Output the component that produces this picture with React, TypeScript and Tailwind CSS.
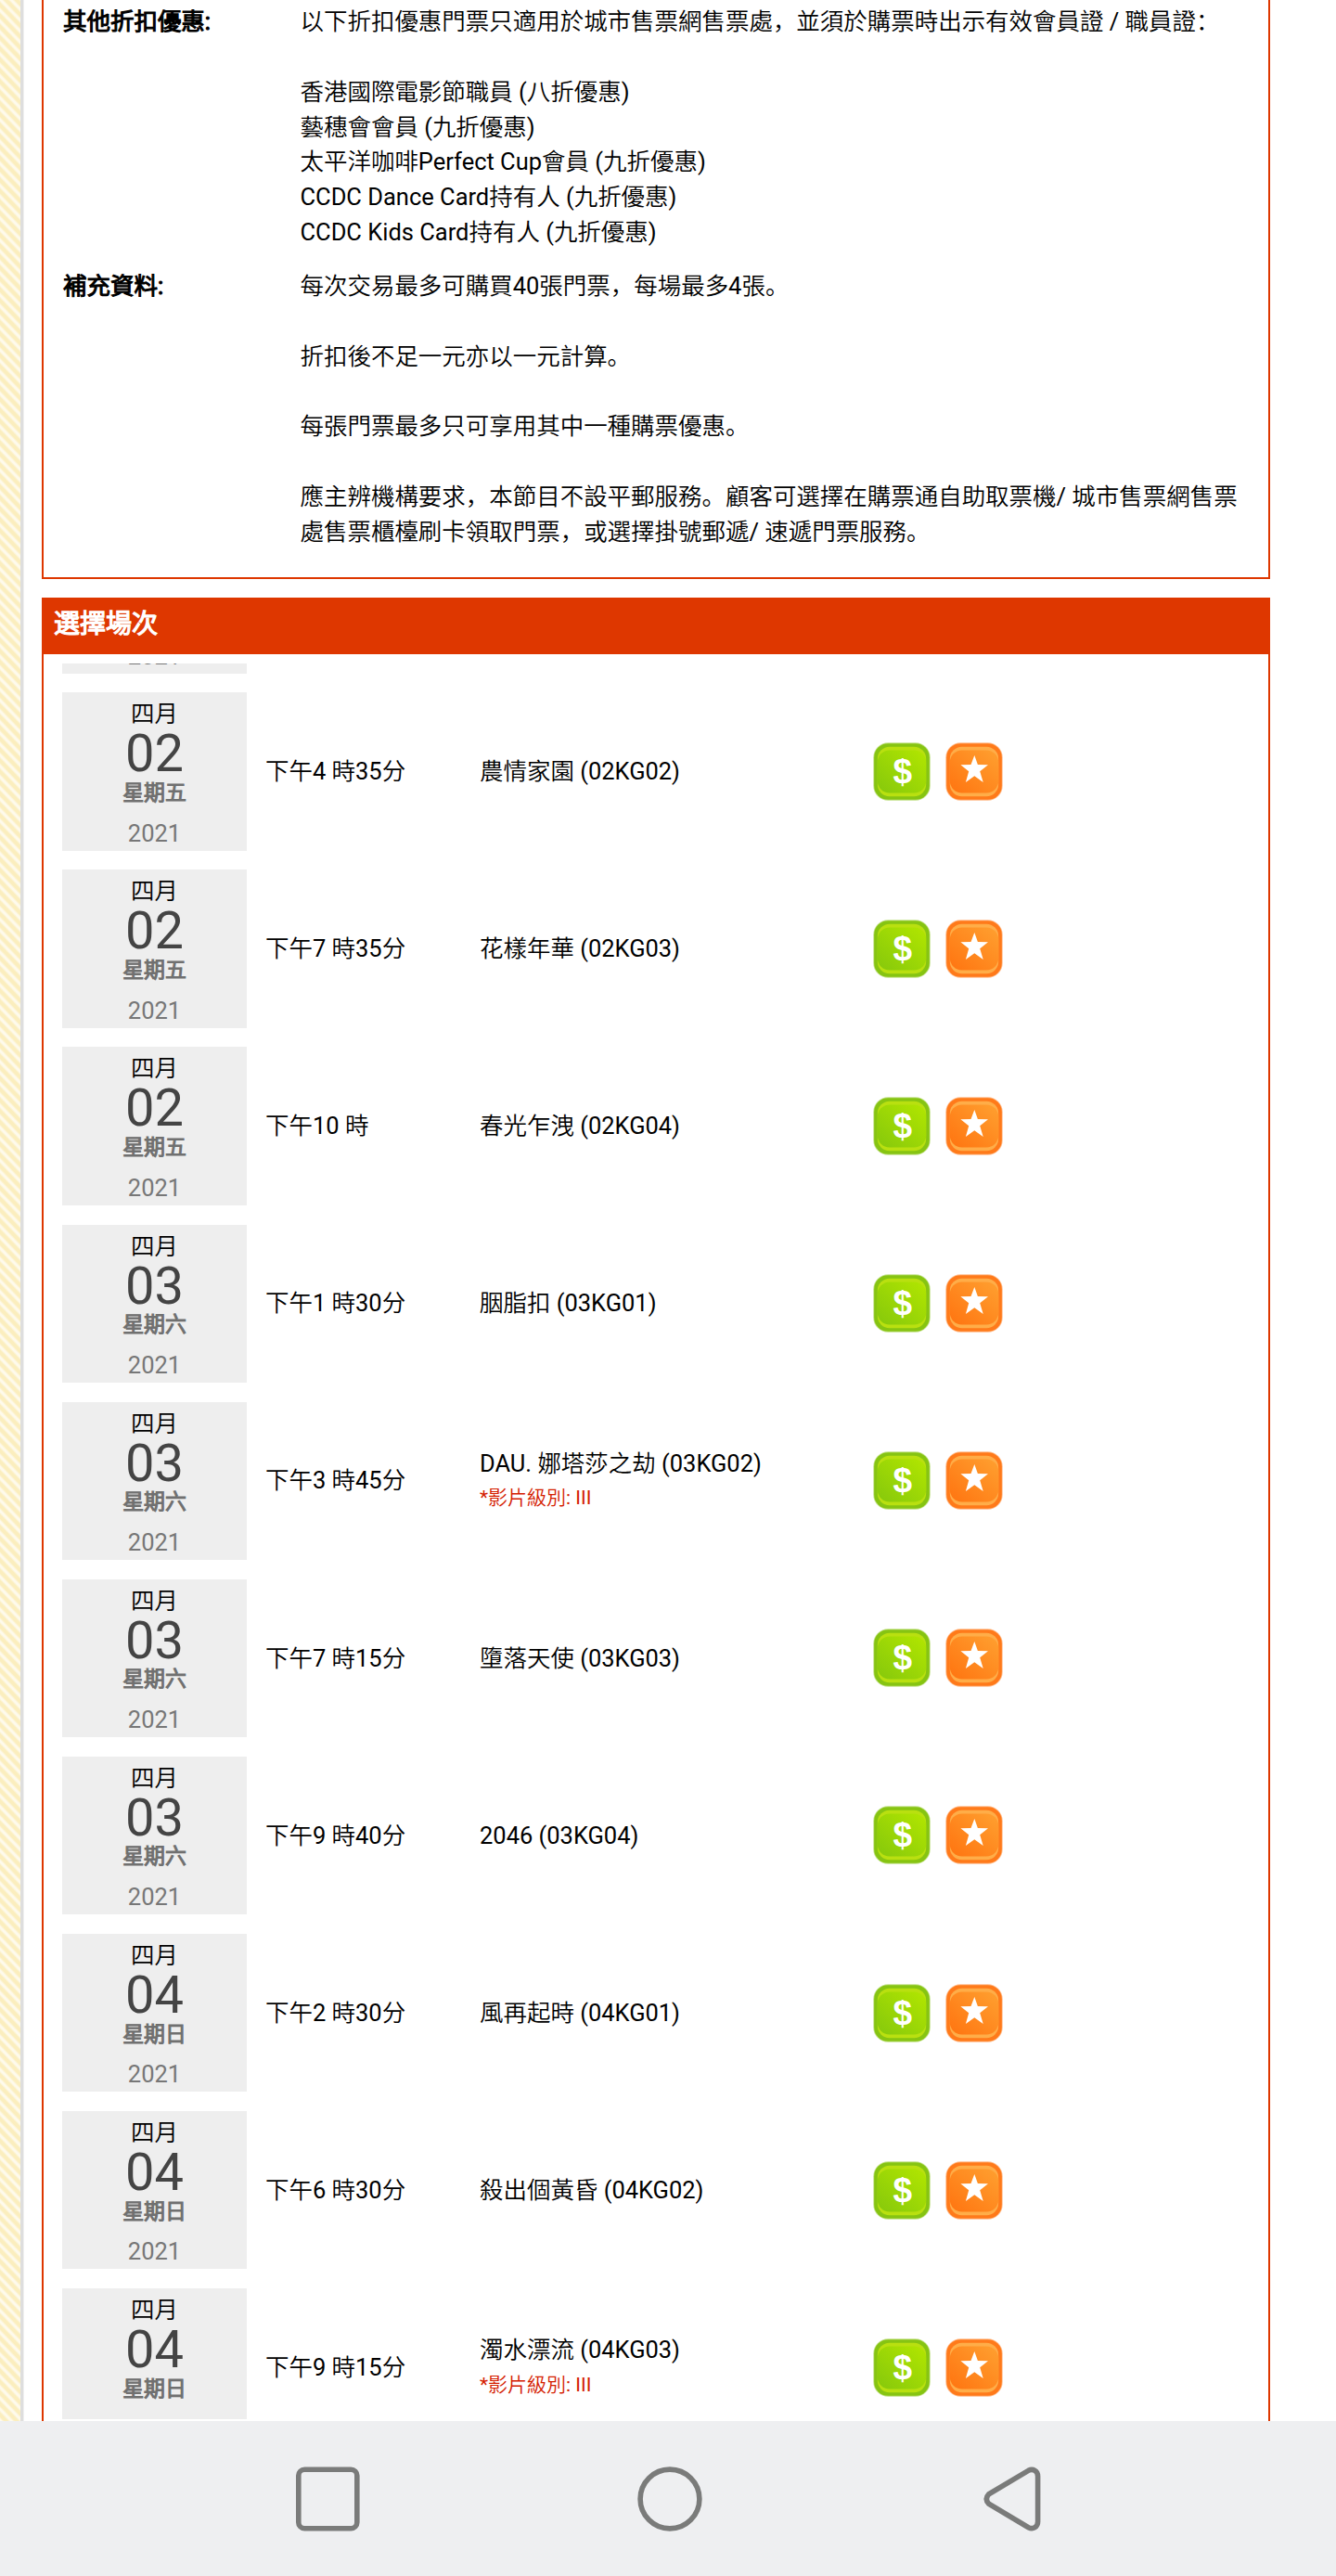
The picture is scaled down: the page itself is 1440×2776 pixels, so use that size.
import React from "react";

const SESSIONS = [
  { day: "02", week: "星期五", time: "下午4 時35分", title: "農情家園 (02KG02)" },
  { day: "02", week: "星期五", time: "下午7 時35分", title: "花樣年華 (02KG03)" },
  { day: "02", week: "星期五", time: "下午10 時", title: "春光乍洩 (02KG04)" },
  { day: "03", week: "星期六", time: "下午1 時30分", title: "胭脂扣 (03KG01)" },
  { day: "03", week: "星期六", time: "下午3 時45分", title: "DAU. 娜塔莎之劫 (03KG02)", note: "*影片級別: III" },
  { day: "03", week: "星期六", time: "下午7 時15分", title: "墮落天使 (03KG03)" },
  { day: "03", week: "星期六", time: "下午9 時40分", title: "2046 (03KG04)" },
  { day: "04", week: "星期日", time: "下午2 時30分", title: "風再起時 (04KG01)" },
  { day: "04", week: "星期日", time: "下午6 時30分", title: "殺出個黃昏 (04KG02)" },
  { day: "04", week: "星期日", time: "下午9 時15分", title: "濁水漂流 (04KG03)", note: "*影片級別: III" },
];

function Gradients() {
  return (
    <svg width="0" height="0" className="absolute">
      <defs>
        <linearGradient id="green" x1="0" y1="1" x2="1" y2="0">
          <stop offset="0" stopColor="#86c80c" />
          <stop offset="1" stopColor="#b2e600" />
        </linearGradient>
        <linearGradient id="orange" x1="0" y1="1" x2="1" y2="0">
          <stop offset="0" stopColor="#ff7410" />
          <stop offset="1" stopColor="#ffa030" />
        </linearGradient>
      </defs>
    </svg>
  );
}

function BuyIcon() {
  return (
    <svg viewBox="0 0 62 63" className="h-[63px] w-[62px]">
      <rect x="0.3" y="0.3" width="61.4" height="62.4" rx="16" fill="#86c412" fillOpacity="0.5" />
      <rect x="1.2" y="1.2" width="59.6" height="60.6" rx="15" fill="#86c412" />
      <rect x="4.8" y="4.8" width="52.4" height="53.4" rx="13" fill="#b9e010" />
      <rect x="4.8" y="8.5" width="52.4" height="46" rx="13" fill="url(#green)" />
      <text x="31.8" y="43.5" textAnchor="middle" fontFamily="Liberation Sans" fontWeight="700" fontSize="37" fill="#fff">$</text>
    </svg>
  );
}

function StarIcon() {
  return (
    <svg viewBox="0 0 62 63" className="h-[63px] w-[62px]">
      <rect x="0.3" y="0.3" width="61.4" height="62.4" rx="16" fill="#ff7a1a" fillOpacity="0.5" />
      <rect x="1.2" y="1.2" width="59.6" height="60.6" rx="15" fill="#ff7a1a" />
      <rect x="4.8" y="4.8" width="52.4" height="53.4" rx="13" fill="#ffad48" />
      <rect x="4.8" y="8.5" width="52.4" height="46" rx="13" fill="url(#orange)" />
      <path d="M31.3 14 L34.9 24 L46 24.2 L37.2 31.3 L40.7 43 L31.3 36.2 L21.9 43 L25.2 31.3 L16.4 24.2 L27.5 24 Z" fill="#fff" />
    </svg>
  );
}

function InfoRow({ label, children }: { label: string; children: React.ReactNode }) {
  return (
    <div className="flex">
      <div className="w-[256.5px] shrink-0 pl-[1px] [-webkit-text-stroke:1.2px_#000]">{label}</div>
      <div className="w-[1030px] whitespace-pre-line">{children}</div>
    </div>
  );
}

function Session({ s }: { s: (typeof SESSIONS)[number] }) {
  return (
    <div className="flex h-[170.7px] shrink-0 items-center">
      <div className="flex h-full w-[199px] flex-col items-center bg-[#eeeeee] pt-[5px]">
        <div className="h-[37px] leading-[37px]">四月</div>
        <div className="h-[50px] text-[56px] leading-[48px] text-[#444]">{s.day}</div>
        <div className="h-[36px] text-[22.9px] leading-[33px] text-[#707070] [-webkit-text-stroke:1.2px_#707070]">{s.week}</div>
        <div className="mt-[6px] leading-[37px] text-[#777]">2021</div>
      </div>
      <div className="ml-[20px] w-[231px] pt-px">{s.time}</div>
      <div className="w-[424px] pt-px">
        <div>{s.title}</div>
        {s.note && <div className="text-[21px] text-[#d42000]">{s.note}</div>}
      </div>
      <div className="flex gap-4">
        <BuyIcon />
        <StarIcon />
      </div>
    </div>
  );
}

export default function App() {
  return (
    <div className="flex h-[2776px] w-[1440px] flex-col overflow-hidden bg-white font-['Roboto','Noto_Sans_CJK_SC_DemiLight','Noto_Sans_CJK_SC',sans-serif] text-[25.48px] leading-[37.85px] text-black">
      <Gradients />
      <div className="flex h-[2609px] overflow-hidden">
        <div className="h-full w-[22px] shrink-0 bg-[repeating-linear-gradient(46deg,#fefaec_0px,#fefaec_1.5px,#fbeebe_3.5px,#fbeebe_6.2px,#fefaec_8.2px)]" />
        <div className="h-full w-[4px] shrink-0 border-r border-[#f0f0f0] bg-[#dedede]" />
        <div className="ml-[19px] flex w-[1324px] flex-col">
          <div className="flex h-[624px] shrink-0 flex-col border-x-2 border-b-2 border-[#de3700] pl-[20px] pt-[5px]">
            <InfoRow label="其他折扣優惠:">
              {"以下折扣優惠門票只適用於城市售票網售票處，並須於購票時出示有效會員證 / 職員證：\n\n香港國際電影節職員 (八折優惠)\n藝穗會會員 (九折優惠)\n太平洋咖啡Perfect Cup會員 (九折優惠)\nCCDC Dance Card持有人 (九折優惠)\nCCDC Kids Card持有人 (九折優惠)"}
            </InfoRow>
            <div className="h-[20px]" />
            <InfoRow label="補充資料:">
              {"每次交易最多可購買40張門票，每場最多4張。\n\n折扣後不足一元亦以一元計算。\n\n每張門票最多只可享用其中一種購票優惠。\n\n應主辨機構要求，本節目不設平郵服務。顧客可選擇在購票通自助取票機/ 城市售票網售票\n處售票櫃檯刷卡領取門票，或選擇掛號郵遞/ 速遞門票服務。"}
            </InfoRow>
          </div>
          <div className="mt-[20px] flex h-[1965px] shrink-0 flex-col border-x-2 border-[#de3700]">
            <div className="h-[61px] bg-[#de3700] pl-[11px] text-[28px] leading-[58px] text-white [-webkit-text-stroke:1.4px_#fff]">選擇場次</div>
            <div className="mt-[10px] flex h-[1892px] flex-col gap-[20.37px] overflow-hidden pl-[20px]">
              <div className="flex h-[11px] w-[199px] shrink-0 items-end justify-center overflow-hidden bg-[#eeeeee] text-[#777]">
                <div className="-mb-[0.5px]">2021</div>
              </div>
              {SESSIONS.map((s) => (
                <Session key={s.title} s={s} />
              ))}
            </div>
          </div>
        </div>
      </div>
      <div className="flex h-[167px] shrink-0 items-center bg-[#eeeff1] pl-[319px]">
        <svg viewBox="0 0 69 70" className="h-[70px] w-[69px]" fill="none" stroke="#7a7b7a" strokeWidth="5.6">
          <rect x="2.8" y="3.3" width="63" height="63.4" rx="6.5" />
        </svg>
        <svg viewBox="0 0 70 70" className="ml-[299px] h-[70px] w-[70px]" fill="none" stroke="#7a7b7a" strokeWidth="5.6">
          <circle cx="35" cy="35" r="31.9" />
        </svg>
        <svg viewBox="0 0 63 70" className="ml-[303px] h-[70px] w-[63px]" fill="none" stroke="#7a7b7a" strokeWidth="5.6">
          <path d="M48.5 4.3 L5.8 29.8 Q0.8 35 5.8 40.2 L48.5 65.7 C53.5 68.2 58.6 65 58.6 59.5 L58.6 10.5 C58.6 5 53.5 1.8 48.5 4.3 Z" />
        </svg>
      </div>
    </div>
  );
}
